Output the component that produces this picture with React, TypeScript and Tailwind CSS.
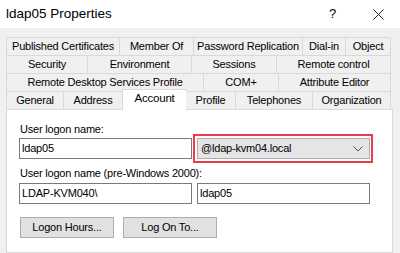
const rows: { label: string; w: number }[][] = [
  [
    { label: 'Published Certificates', w: 114 },
    { label: 'Member Of', w: 74 },
    { label: 'Password Replication', w: 109 },
    { label: 'Dial-in', w: 43 },
    { label: 'Object', w: 45 },
  ],
  [
    { label: 'Security', w: 82 },
    { label: 'Environment', w: 104 },
    { label: 'Sessions', w: 85 },
    { label: 'Remote control', w: 114 },
  ],
  [
    { label: 'Remote Desktop Services Profile', w: 198 },
    { label: 'COM+', w: 75 },
    { label: 'Attribute Editor', w: 112 },
  ],
]

const bottomRow = [
  { label: 'General', w: 58 },
  { label: 'Address', w: 59 },
  { label: 'Account', w: 63, active: true },
  { label: 'Profile', w: 50 },
  { label: 'Telephones', w: 77 },
  { label: 'Organization', w: 78 },
]

function Tab({ label, w, first }: { label: string; w: number; first: boolean }) {
  return (
    <div
      className={`h-[18px] flex items-center justify-center border-t border-r border-[#d9d9d9] bg-[#f0f0f0] ${first ? 'border-l' : ''}`}
      style={{ width: w }}
    >
      {label}
    </div>
  )
}

function TextBox({ value }: { value: string }) {
  return (
    <div className="w-[173px] h-[21px] border border-[#7a7a7a] bg-white flex items-center px-[2px]">
      {value}
    </div>
  )
}

function Button({ label }: { label: string }) {
  return (
    <div className="w-[94px] h-[21px] border border-[#adadad] bg-[#e1e1e1] flex items-center justify-center">
      {label}
    </div>
  )
}

export default function App() {
  return (
    <div
      className="w-[400px] h-[253px] overflow-hidden bg-[#f0f0f0] text-[11px] tracking-[-0.2px] text-black flex flex-col"
      style={{ fontFamily: '"Liberation Sans", Arial, sans-serif' }}
    >
      <div className="h-[28px] bg-white flex items-center pl-[6px] pr-[16px]">
        <span className="text-[13.5px] tracking-normal flex-1">ldap05 Properties</span>
        <span className="text-[13px] w-[8px] mr-[36px]">?</span>
        <svg width="11" height="11" viewBox="0 0 11 11" className="text-[#222]">
          <path d="M0.5 0.5 L10.5 10.5 M10.5 0.5 L0.5 10.5" stroke="currentColor" strokeWidth="1" />
        </svg>
      </div>

      <div className="pl-[6px] pt-[9px] flex flex-col">
        {rows.map((row, i) => (
          <div key={i} className="flex">
            {row.map((t, j) => (
              <Tab key={t.label} label={t.label} w={t.w} first={j === 0} />
            ))}
          </div>
        ))}
        <div className="flex items-end h-[18px] relative z-10">
          {bottomRow.map((t, j) =>
            t.active ? (
              <div
                key={t.label}
                className="h-[21px] -mb-[1px] -ml-[1px] flex items-center justify-center border-t border-l border-r border-[#d9d9d9] bg-white text-[11.5px] pb-[2px]"
                style={{ width: t.w + 2 }}
              >
                {t.label}
              </div>
            ) : (
              <div
                key={t.label}
                className={`h-[18px] flex items-center justify-center border-t border-r border-[#d9d9d9] bg-[#f0f0f0] ${j === 0 ? 'border-l' : ''} ${bottomRow[j - 1]?.active ? '-ml-[1px]' : ''}`}
                style={{ width: t.w }}
              >
                {t.label}
              </div>
            )
          )}
        </div>
      </div>

      <div className="ml-[6px] mr-[7px] flex-1 border border-[#d9d9d9] bg-white pl-[12px] pt-[13px] flex flex-col">
        <div className="h-[12px] leading-[12px] pl-[1px]">User logon name:</div>
        <div className="flex items-center gap-[1px] -mt-[1px]">
          <TextBox value="ldap05" />
          <div className="border-2 border-[#ee3b45] pl-[2px] pr-[1px] py-[2px]">
            <div className="w-[173px] h-[21px] border border-[#adadad] bg-[#e5e5e5] flex items-center pl-[3px] pr-[6px]">
              <span className="flex-1">@ldap-kvm04.local</span>
              <svg width="10" height="6" viewBox="0 0 10 6">
                <path d="M0.5 0.5 L5 5 L9.5 0.5" fill="none" stroke="#555" strokeWidth="1" />
              </svg>
            </div>
          </div>
        </div>
        <div className="h-[12px] leading-[12px] mt-[4px] pl-[1px]">User logon name (pre-Windows 2000):</div>
        <div className="flex gap-[5px] mt-[4px]">
          <TextBox value="LDAP-KVM040\" />
          <TextBox value="ldap05" />
        </div>
        <div className="flex gap-[9px] mt-[13px] pl-[1px]">
          <Button label="Logon Hours..." />
          <Button label="Log On To..." />
        </div>
      </div>
    </div>
  )
}
